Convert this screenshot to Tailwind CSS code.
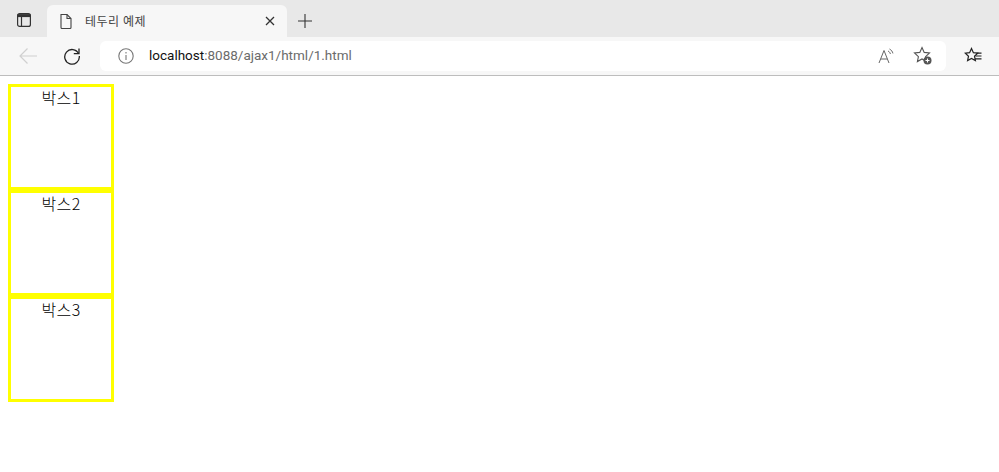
<!DOCTYPE html>
<html lang="ko">
<head>
  <meta charset="UTF-8" />
  <title>테두리 예제</title>
  <script src="https://cdn.jsdelivr.net/npm/@tailwindcss/browser@4"></script>
</head>
<body class="bg-white h-[472px] overflow-hidden font-['Noto_Sans_CJK_KR','Noto_Sans',sans-serif]">
  <!-- Tab strip -->
  <div class="h-[37px] bg-[#e8e8e8] flex items-end">
    <div class="w-[47px] h-[32px] flex items-center justify-center">
      <svg width="16" height="16" viewBox="0 0 16 16" fill="none" stroke="#333" stroke-width="1.2" class="mt-[-3px]">
        <rect x="1.6" y="1.6" width="12.8" height="12.8" rx="2"/>
        <path d="M1.6 3.6h12.8" stroke-width="3"/>
        <path d="M5.5 5v9.4"/>
      </svg>
    </div>
    <div class="w-[240px] h-[32px] bg-[#f7f7f7] rounded-t-md flex items-center">
      <svg width="16" height="16" viewBox="0 0 16 16" fill="none" stroke="#444" stroke-width="1.1" class="ml-[11px] shrink-0">
        <path d="M3 1.5h6l4 4v9a1 1 0 0 1-1 1H4a1 1 0 0 1-1-1z"/>
        <path d="M9 1.5v4h4"/>
      </svg>
      <span class="ml-[11px] text-[12px] leading-none text-[#444] tracking-[0.4px]">테두리 예제</span>
      <svg width="10" height="10" viewBox="0 0 10 10" stroke="#333" stroke-width="1.3" class="ml-auto mr-[12px]">
        <path d="M1 1l8 8M9 1l-8 8"/>
      </svg>
    </div>
    <div class="w-[36px] h-[32px] flex items-center justify-center">
      <svg width="16" height="16" viewBox="0 0 16 16" stroke="#333" stroke-width="1.1" class="ml-[-1px] mt-[-1px]">
        <path d="M8 1v14M1 8h14"/>
      </svg>
    </div>
  </div>

  <!-- Toolbar -->
  <div class="h-[39px] bg-[#f7f7f7] border-b border-[#bdbdbd] flex items-center">
    <svg width="20" height="18" viewBox="0 0 20 18" fill="none" stroke="#d0d0d0" stroke-width="1.2" class="ml-[18px] shrink-0">
      <path d="M19 9H2M9.5 1.5L2 9l7.5 7.5"/>
    </svg>
    <svg width="18" height="18" viewBox="0 0 18 18" fill="none" stroke="#222" stroke-width="1.3" class="ml-[25px] shrink-0">
      <path d="M15.6 6.6A7.3 7.3 0 1 0 16.3 9"/>
      <path d="M16 1.5v5.2h-5.2"/>
    </svg>
    <div class="ml-[19px] w-[846px] h-[30px] bg-white rounded-md flex items-center shrink-0">
      <svg width="16" height="16" viewBox="0 0 16 16" fill="none" stroke="#777" stroke-width="1.1" class="ml-[18px] shrink-0">
        <circle cx="8" cy="8" r="7.2"/>
        <path d="M8 7v5M8 4v1.6"/>
      </svg>
      <span class="ml-[15px] text-[13.5px] leading-none text-[#6b6b6b] font-['Roboto',sans-serif]"><span class="text-[#111]">localhost</span>:8088/ajax1/html/1.html</span>
      <svg width="16" height="16" viewBox="0 0 16 16" fill="none" stroke="#666" stroke-width="1" class="ml-auto shrink-0">
        <path d="M1 15L6 2.5 11 15M2.8 11h6.4"/>
        <path d="M10 3c1.3.6 2.1 1.7 2.4 3M11.5 1c1.8.9 3 2.6 3.4 4.4"/>
      </svg>
      <svg width="20" height="20" viewBox="0 0 20 20" fill="none" stroke="#555" stroke-width="1.1" class="ml-[19px] mr-[13px] shrink-0">
        <path d="M9 1.5l2.2 4.9 5.3.6-3.9 3.6 1 5-4.6-2.6-4.6 2.6 1-5L1.5 7l5.3-.6z"/>
        <circle cx="14.5" cy="14.5" r="4" fill="#555" stroke="none"/>
        <path d="M14.5 12.5v4M12.5 14.5h4" stroke="#fff"/>
      </svg>
    </div>
    <svg width="18" height="18" viewBox="0 0 18 18" fill="none" stroke="#222" stroke-width="1.2" class="ml-[18px] shrink-0">
      <path d="M7.5 1.5l1.9 4.2 4.3.5-3.2 3 .9 4.4-3.9-2.2-3.9 2.2.9-4.4-3.2-3 4.3-.5z"/>
      <path d="M12.5 6.2h5M11.5 9h6M11 11.8h6.5"/>
    </svg>
  </div>

  <!-- Page content -->
  <div class="p-2 text-black text-[16px] leading-[20px] tracking-[0.4px] font-light text-center">
    <div class="w-[106px] h-[106px] border-[3px] border-[#ffff00] box-border">박스1</div>
    <div class="w-[106px] h-[106px] border-[3px] border-[#ffff00] box-border">박스2</div>
    <div class="w-[106px] h-[106px] border-[3px] border-[#ffff00] box-border">박스3</div>
  </div>
</body>
</html>
